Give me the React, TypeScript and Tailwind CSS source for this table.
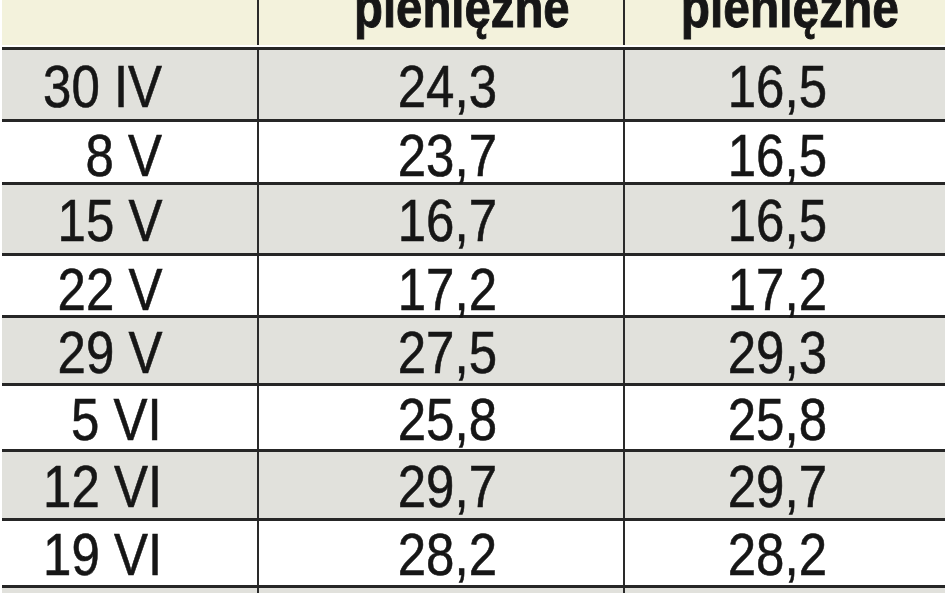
const rows = [
  { date: "30 IV", a: "24,3", b: "16,5", h: "h-[72px]", bg: "bg-[#e1e1dc]" },
  { date: "8 V", a: "23,7", b: "16,5", h: "h-[63px]", bg: "bg-white" },
  { date: "15 V", a: "16,7", b: "16,5", h: "h-[71px]", bg: "bg-[#e1e1dc]" },
  { date: "22 V", a: "17,2", b: "17,2", h: "h-[62px]", bg: "bg-white" },
  { date: "29 V", a: "27,5", b: "29,3", h: "h-[68px]", bg: "bg-[#e1e1dc]" },
  { date: "5 VI", a: "25,8", b: "25,8", h: "h-[66px]", bg: "bg-white" },
  { date: "12 VI", a: "29,7", b: "29,7", h: "h-[69px]", bg: "bg-[#e1e1dc]" },
  { date: "19 VI", a: "28,2", b: "28,2", h: "h-[67px]", bg: "bg-white" },
];

export default function App() {
  return (
    <div className="h-[593px] w-[948px] overflow-hidden bg-white font-['Liberation_Sans',Arial,sans-serif] text-[#161616]">
      <div className="ml-[2px] mr-[3px]">
        {/* header, top half cut off */}
        <div className="grid h-[47px] grid-cols-[257px_366px_1fr] bg-white pb-[2px]">
          <div className="border-r-2 border-[#2a2a2a] bg-[#f3f2dc]" />
          <div className="overflow-hidden border-r-2 border-[#2a2a2a] bg-[#f3f2dc] pl-[42px] text-center">
            <span className="-mt-[21px] inline-block scale-x-[0.83] text-[57px] font-bold leading-none [-webkit-text-stroke:1px_#161616]">
              pieniężne
            </span>
          </div>
          <div className="overflow-hidden bg-[#f3f2dc] pl-[9px] text-center">
            <span className="-mt-[21px] inline-block scale-x-[0.84] text-[57px] font-bold leading-none [-webkit-text-stroke:1px_#161616]">
              pieniężne
            </span>
          </div>
        </div>

        {rows.map((r) => (
          <div
            key={r.date}
            className={`grid grid-cols-[257px_366px_1fr] border-t-[3px] border-[#262626] ${r.h} ${r.bg}`}
          >
            <div className="flex items-center justify-end border-r-2 border-[#2a2a2a] pt-[4px] pr-[95px] text-[60px] leading-none">
              <span className="inline-block origin-right scale-x-[0.85] [-webkit-text-stroke:0.6px_#161616]">{r.date}</span>
            </div>
            <div className="flex items-center justify-center border-r-2 border-[#2a2a2a] pt-[4px] pl-[13px] text-[60px] leading-none">
              <span className="inline-block scale-x-[0.85] [-webkit-text-stroke:0.6px_#161616]">{r.a}</span>
            </div>
            <div className="flex items-center justify-center pt-[4px] pr-[15px] text-[60px] leading-none">
              <span className="inline-block scale-x-[0.85] [-webkit-text-stroke:0.6px_#161616]">{r.b}</span>
            </div>
          </div>
        ))}

        <div className="grid h-[40px] grid-cols-[257px_366px_1fr] border-t-[3px] border-[#262626] bg-[#e1e1dc]">
          <div className="border-r-2 border-[#2a2a2a]" />
          <div className="border-r-2 border-[#2a2a2a]" />
          <div />
        </div>
      </div>
    </div>
  );
}
